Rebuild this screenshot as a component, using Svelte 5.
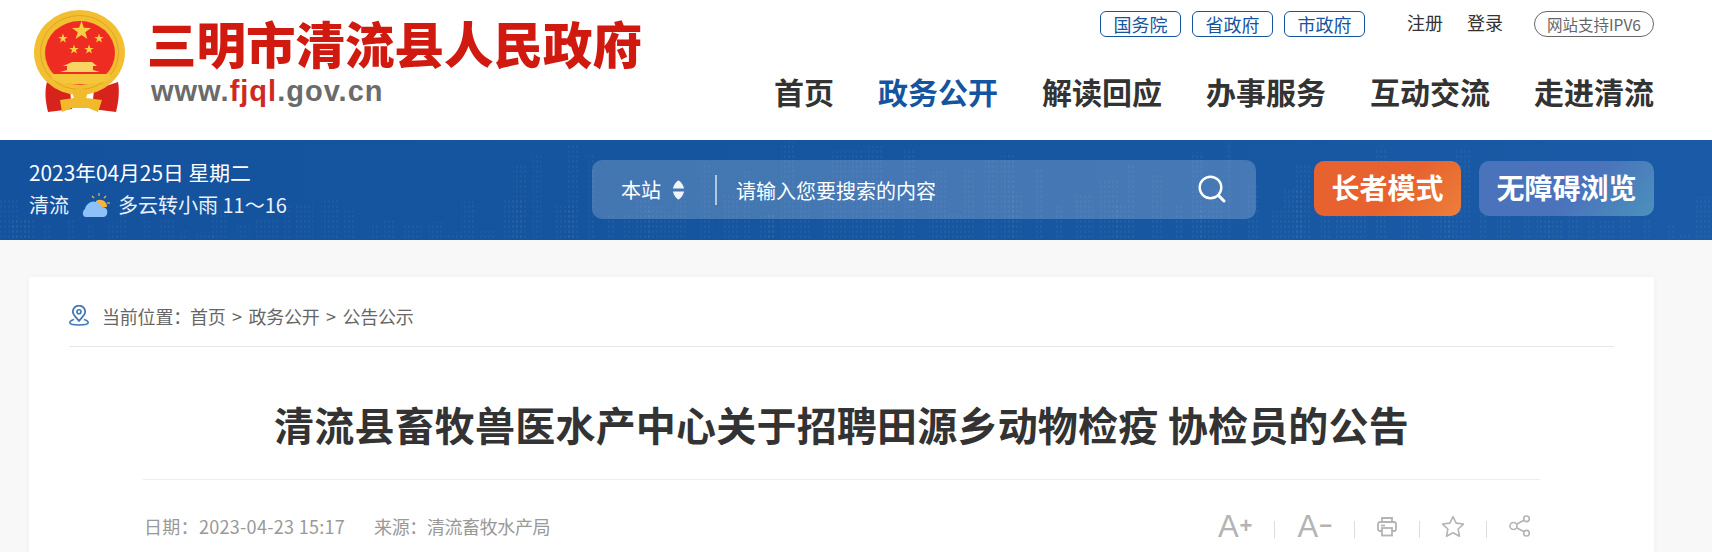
<script>
  const topLinks = ['国务院', '省政府', '市政府'];
  const navItems = ['首页', '政务公开', '解读回应', '办事服务', '互动交流', '走进清流'];

  // faint city skyline behind the blue bar
  const towers = [];
  let seed = 17;
  function rand(max) {
    seed = (seed * 9301 + 49297) % 233280;
    return (seed / 233280) * max;
  }
  for (let x = 0; x < 1712; x += 9 + rand(18)) {
    const inCentre = x > 500 && x < 1500;
    const h = inCentre ? 25 + rand(75) : 6 + rand(40);
    towers.push({ x, w: 6 + rand(14), h });
  }

  const stars = [
    { x: 81.5, y: 31, r: 10 },
    { x: 63, y: 38.500, r: 5 },
    { x: 99, y: 38.500, r: 5 },
    { x: 74, y: 49.500, r: 5 },
    { x: 89, y: 49.500, r: 5 }
  ];
  function starPoints(s) {
    const pts = [];
    for (let i = 0; i < 10; i++) {
      const r = i % 2 ? s.r * 0.4 : s.r;
      const a = -Math.PI / 2 + (i * Math.PI) / 5;
      pts.push(`${(s.x + r * Math.cos(a)).toFixed(1)},${(s.y + r * Math.sin(a)).toFixed(1)}`);
    }
    return pts.join(' ');
  }
</script>

<div class="page">
  <header class="header">
    <div class="logo">
      <svg class="emblem" width="100" height="110" viewBox="30 5 100 110">
        <path d="M47 82 C44 92 46 104 48 112 L72 109 L70 90 Z" fill="#d8231d" />
        <path d="M118 82 C120 92 118 104 116 112 L92 109 L94 90 Z" fill="#d8231d" />
        <ellipse cx="79.500" cy="52.500" rx="45.500" ry="42.500" fill="#f3bf32" />
        <ellipse cx="79.500" cy="52.500" rx="39" ry="37" fill="none" stroke="#e2a321" stroke-width="1" />
        <ellipse cx="80" cy="53" rx="35" ry="32" fill="#ee2c22" />
        {#each stars as s}
          <polygon points={starPoints(s)} fill="#f6cf45" />
        {/each}
        <path d="M72 62 H92 L97 66 H93 V70 L100 72 H60 L67 70 V66 H63 Z" fill="#f8d463" />
        <path d="M52 74 H110 L110 79 C100 86 62 86 52 79 Z" fill="#f5c63a" />
        <path d="M72 92 L80 86 L88 92 L86 98 L102 100 L98 112 L88 108 H72 L62 112 L60 100 L74 98 Z" fill="#f0ba2c" />
      </svg>
      <div class="logo-text">
        <div class="site-name">三明市清流县人民政府</div>
        <div class="site-url">www.<em>fjql</em>.gov.cn</div>
      </div>
    </div>
    <div class="header-right">
      <div class="top-links">
        {#each topLinks as link}
          <a class="gov-link" href="#top">{link}</a>
        {/each}
        <a class="user-link first" href="#top">注册</a>
        <a class="user-link" href="#top">登录</a>
        <span class="ipv6">网站支持IPV6</span>
      </div>
      <nav class="nav">
        {#each navItems as item, i}
          <a href="#top" class:active={i === 1}>{item}</a>
        {/each}
      </nav>
    </div>
  </header>

  <section class="banner">
    <svg class="skyline" width="1712" height="100" viewBox="0 0 1712 100" aria-hidden="true">
      <defs>
        <pattern id="windows" width="4" height="5" patternUnits="userSpaceOnUse">
          <rect width="2" height="3" fill="#fff" />
        </pattern>
      </defs>
      {#each towers as t}
        <rect x={t.x} y={100 - t.h} width={t.w} height={t.h} fill="url(#windows)" opacity="0.035" />
      {/each}
    </svg>
    <div class="banner-inner">
      <div class="date-block">
        <div class="date">2023年04月25日 星期二</div>
        <div class="weather">
          <span>清流</span>
          <svg width="28" height="26" viewBox="0 0 28 26">
            <path d="M14 9 a7 7 0 0 1 11 6 h-11 z" fill="#f6b53c" />
            <g stroke="#f6b53c" stroke-width="1.2">
              <line x1="17" y1="1" x2="17" y2="4" />
              <line x1="24" y1="4" x2="22" y2="6" />
              <line x1="28" y1="11" x2="25" y2="11" />
              <line x1="10" y1="4" x2="12" y2="6" />
            </g>
            <path d="M4 25 C0 25 0 19 3 17 C4 12 10 8 14 10 C18 11 19 14 20 15 C25 15 26 19 25 22 C24.500 24 23 25 21 25 Z" fill="#8cc2f7" />
          </svg>
          <span class="forecast">多云转小雨 11～16</span>
        </div>
      </div>
      <div class="search">
        <span class="scope">本站</span>
        <svg class="updown" width="11" height="20" viewBox="0 0 11 20">
          <path d="M5.500 0.500 C7 0.500 11 6 11 8.500 H0 C0 6 4 0.500 5.500 0.500 Z M5.500 19.500 C4 19.500 0 14 0 11.500 H11 C11 14 7 19.500 5.500 19.500 Z" fill="#fff" opacity="0.92" />
        </svg>
        <span class="search-sep"></span>
        <span class="placeholder">请输入您要搜索的内容</span>
        <svg class="search-icon" width="28" height="28" viewBox="0 0 28 28" fill="none" stroke="#fff">
          <circle cx="12.500" cy="12.500" r="10.800" stroke-width="2.400" />
          <path d="M20.500 20.500 L26 26" stroke-width="3" stroke-linecap="round" />
        </svg>
      </div>
      <a class="mode-btn elder" href="#top">长者模式</a>
      <a class="mode-btn access" href="#top">无障碍浏览</a>
    </div>
  </section>

  <main class="main">
    <article class="card">
      <div class="crumbs">
        <svg width="20" height="21" viewBox="0 0 20 21" fill="none" stroke="#3f77b5">
          <path d="M10 16 C6.500 12 3.800 9.500 3.800 6.800 A6.200 6.200 0 0 1 16.200 6.800 C16.200 9.500 13.500 12 10 16 Z" stroke-width="1.800" />
          <circle cx="10" cy="6.800" r="2" stroke-width="1.600" />
          <path d="M5 14.500 C2.500 15.300 0.800 16.500 0.800 17.800 C0.800 19.500 4.500 20 10 20 C15.500 20 19.200 19.500 19.200 17.800 C19.200 16.500 17.500 15.300 15 14.500" stroke-width="1.600" />
        </svg>
        <span class="crumb-text"><span class="crumb-label">当前位置：</span>首页<span class="gt">&gt;</span>政务公开<span class="gt">&gt;</span>公告公示</span>
      </div>
      <h1 class="title">清流县畜牧兽医水产中心关于招聘田源乡动物检疫 协检员的公告</h1>
      <div class="meta">
        <div class="meta-text">
          <span class="meta-date">日期：2023-04-23 15:17</span>
          <span class="meta-source">来源：清流畜牧水产局</span>
        </div>
        <div class="tools">
          <span class="font-btn">A<small>+</small></span>
          <i class="tool-sep"></i>
          <span class="font-btn">A<small>−</small></span>
          <i class="tool-sep"></i>
          <svg width="20" height="21" viewBox="0 0 20 21" fill="none" stroke="#b4b4b4" stroke-width="1.800">
            <path d="M5 6 V2 H15 V6" />
            <rect x="1" y="6" width="18" height="9" rx="2" />
            <rect x="5" y="12" width="10" height="7.500" fill="#fff" />
            <line x1="4" y1="9.500" x2="8" y2="9.500" />
          </svg>
          <i class="tool-sep"></i>
          <svg width="22" height="21" viewBox="1 1 21 20" fill="none" stroke="#b4b4b4" stroke-width="1.500" stroke-linejoin="round">
            <path d="M11.500 1.500 L14.500 7.800 L21.500 8.700 L16.400 13.400 L17.700 20.300 L11.500 17 L5.300 20.300 L6.600 13.400 L1.500 8.700 L8.500 7.800 Z" />
          </svg>
          <i class="tool-sep"></i>
          <svg width="22" height="22" viewBox="0 0 22 22" fill="none" stroke="#b4b4b4" stroke-width="1.600">
            <circle cx="4.500" cy="11" r="3.500" />
            <circle cx="17.500" cy="3.800" r="2.800" />
            <circle cx="17.500" cy="18.200" r="2.800" />
            <path d="M7.500 9.300 L15 5.200 M7.500 12.700 L15 16.800" />
          </svg>
        </div>
      </div>
    </article>
  </main>
</div>

<style>
  :global(body) {
    margin: 0;
    background: #f8f8f8;
    overflow: hidden;
  }

  .page {
    width: 1712px;
    height: 552px;
    overflow: hidden;
    font-family: "Noto Sans CJK SC", "Liberation Sans", sans-serif;
    color: #333;
  }

  a {
    text-decoration: none;
    color: inherit;
  }

  .header {
    height: 140px;
    background: #fff;
    padding: 0 58px 0 30px;
    display: flex;
    justify-content: space-between;
  }

  .logo {
    display: flex;
    align-items: flex-start;
    padding-top: 5px;
  }

  .logo-text {
    margin-left: 17px;
    margin-top: 8px;
  }

  .site-name {
    font-size: 49.500px;
    line-height: 60px;
    font-weight: 900;
    color: #d0190f;
    white-space: nowrap;
  }

  .site-url {
    font-family: "Liberation Sans", sans-serif;
    font-size: 29px;
    line-height: 34px;
    margin: 1px 0 0 4px;
    font-weight: 700;
    color: #6b6b6b;
    letter-spacing: 1px;
  }

  .site-url em {
    font-style: normal;
    color: #cf2a20;
  }

  .header-right {
    display: flex;
    flex-direction: column;
    align-items: flex-end;
  }

  .top-links {
    display: flex;
    align-items: center;
    margin-top: 11px;
  }

  .gov-link {
    width: 79px;
    height: 24px;
    margin-right: 11px;
    border: 1px solid #15559f;
    border-radius: 6px;
    font-size: 18px;
    line-height: 24px;
    text-align: center;
    color: #15559f;
  }

  .user-link {
    font-size: 18px;
    line-height: 26px;
    margin: -4px 24px 0 0;
    color: #333;
  }

  .user-link.first {
    margin-left: 31px;
  }

  .ipv6 {
    width: 118px;
    height: 24px;
    margin-left: 7px;
    border: 1px solid #666;
    border-radius: 13px;
    font-size: 15.500px;
    line-height: 24px;
    text-align: center;
    color: #666;
  }

  .nav {
    display: flex;
    gap: 44px;
    margin-top: 32px;
    font-size: 30px;
    line-height: 44px;
    font-weight: 700;
  }

  .nav a.active {
    color: #15559f;
  }

  .banner {
    position: relative;
    height: 100px;
    background: linear-gradient(90deg, #14529e 0%, #15559f 40%, #1a5aa6 100%);
    overflow: hidden;
  }

  .skyline {
    position: absolute;
    left: 0;
    top: 0;
  }

  .banner-inner {
    position: relative;
    display: flex;
    align-items: center;
    height: 100%;
    padding: 0 58px 1px 29px;
    box-sizing: border-box;
  }

  .date-block {
    width: 563px;
    margin-bottom: 2px;
    color: #fff;
  }

  .date {
    font-size: 20.800px;
    line-height: 27px;
  }

  .weather {
    display: flex;
    align-items: center;
    gap: 13px;
    margin-top: 5px;
    font-size: 20px;
    line-height: 28px;
    color: #eaf1fa;
  }

  .forecast {
    margin-left: -5px;
  }

  .search {
    width: 664px;
    height: 59px;
    box-sizing: border-box;
    padding: 0 24px 0 29px;
    background: rgba(255, 255, 255, 0.2);
    border-radius: 10px;
    display: flex;
    align-items: center;
    color: #fff;
    font-size: 20px;
  }

  .updown {
    margin-left: 12px;
  }

  .search-sep {
    width: 2px;
    height: 30px;
    margin: 0 19px 0 31px;
    background: rgba(255, 255, 255, 0.6);
  }

  .placeholder {
    flex: 1;
    margin-top: 2px;
  }

  .search-icon {
    margin-right: 6px;
    margin-bottom: 2px;
  }

  .mode-btn {
    height: 55px;
    margin-bottom: 2px;
    border-radius: 10px;
    font-size: 28px;
    line-height: 53px;
    font-weight: 700;
    text-align: center;
    color: #fff;
  }

  .elder {
    width: 147px;
    margin-left: 58px;
    background: linear-gradient(135deg, #e7622e 55%, #ec7f3b 100%);
  }

  .access {
    width: 175px;
    margin-left: 18px;
    background: linear-gradient(135deg, #4a73bc 55%, #4b92bb 100%);
  }

  .main {
    padding: 37px 58px 0 29px;
  }

  .card {
    background: #fff;
    height: 400px;
    padding: 0 40px;
    box-shadow: 0 0 6px rgba(0, 0, 0, 0.04);
  }

  .crumbs {
    display: flex;
    align-items: center;
    gap: 14px;
    height: 61px;
    padding-top: 8px;
    border-bottom: 1px solid #e6e6e6;
    box-sizing: content-box;
  }

  .crumb-text {
    font-size: 18px;
    line-height: 26px;
    letter-spacing: -0.200px;
    color: #666;
  }

  .crumb-label {
    margin: 0 -1px 0 -1px;
  }

  .gt {
    margin: 0 6.500px;
  }

  .title {
    margin: 0 74px;
    padding: 50px 0 28px;
    border-bottom: 1px solid #eee;
    font-size: 40px;
    line-height: 54px;
    letter-spacing: 0.200px;
    font-weight: 700;
    text-align: center;
    color: #333;
    white-space: nowrap;
  }

  .meta {
    margin: 0 74px;
    height: 92px;
    display: flex;
    justify-content: space-between;
    align-items: center;
  }

  .meta-text {
    display: flex;
    gap: 29px;
    font-size: 18px;
    color: #999;
  }

  .meta-date {
    letter-spacing: 0.300px;
    margin-left: 1px;
  }

  .meta-source {
    letter-spacing: -0.400px;
  }

  .tools {
    display: flex;
    align-items: center;
    gap: 22px;
    color: #b4b4b4;
    padding-right: 9px;
  }

  .font-btn {
    font-family: "Liberation Sans", sans-serif;
    font-size: 31px;
    line-height: 34px;
  }

  .font-btn small {
    font-size: 22px;
    font-weight: 700;
    margin-left: 1px;
    vertical-align: 4px;
  }

  .tool-sep {
    width: 1px;
    height: 17px;
    margin-top: 6px;
    background: #ddd;
  }
</style>
